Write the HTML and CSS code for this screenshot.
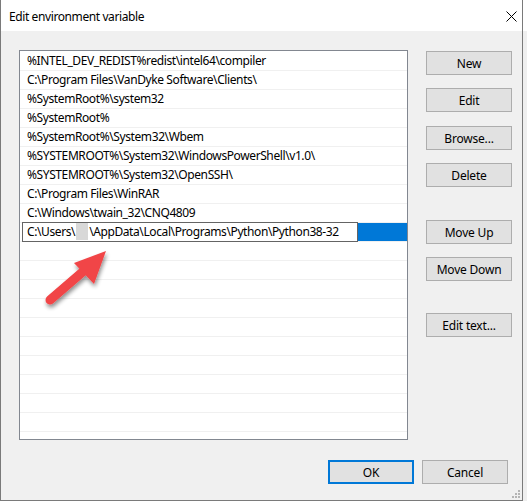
FILE: index.html
```html
<!DOCTYPE html>
<html>
<head>
<meta charset="utf-8">
<link rel="stylesheet" href="styles.css">
</head>
<body>
<div class="window">
  <div class="titlebar">
    <span class="title">Edit environment variable</span>
    <svg class="close" width="11" height="11" viewBox="0 0 11 11"><path d="M0.5 0.5 L10.5 10.5 M10.5 0.5 L0.5 10.5" stroke="#000" stroke-width="1" fill="none"/></svg>
  </div>
  <div class="content">
    <div class="main">
      <div class="list">
        <div class="row">%INTEL_DEV_REDIST%redist\intel64\compiler</div>
        <div class="row">C:\Program Files\VanDyke Software\Clients\</div>
        <div class="row">%SystemRoot%\system32</div>
        <div class="row">%SystemRoot%</div>
        <div class="row">%SystemRoot%\System32\Wbem</div>
        <div class="row">%SYSTEMROOT%\System32\WindowsPowerShell\v1.0\</div>
        <div class="row">%SYSTEMROOT%\System32\OpenSSH\</div>
        <div class="row">C:\Program Files\WinRAR</div>
        <div class="row">C:\Windows\twain_32\CNQ4809</div>
        <div class="row selected">
          <div class="edit">C:\Users\<span class="blur"></span>\AppData\Local\Programs\Python\Python38-32</div>
          <div class="sel-fill"></div>
        </div>
        <div class="row"></div>
        <div class="row"></div>
        <div class="row"></div>
        <div class="row"></div>
        <div class="row"></div>
        <div class="row"></div>
        <div class="row"></div>
        <div class="row"></div>
        <div class="row"></div>
        <div class="row"></div>
        <div class="row"></div>
        <svg class="arrow" width="110" height="80" viewBox="0 0 110 80">
          <defs>
            <filter id="sh" x="-30%" y="-30%" width="160%" height="160%">
              <feGaussianBlur in="SourceAlpha" stdDeviation="2"/>
              <feOffset dx="1" dy="3" result="b"/>
              <feComponentTransfer><feFuncA type="linear" slope="0.45"/></feComponentTransfer>
              <feMerge><feMergeNode/><feMergeNode in="SourceGraphic"/></feMerge>
            </filter>
          </defs>
          <g filter="url(#sh)">
            <line x1="30" y1="60" x2="66" y2="29" stroke="#f14446" stroke-width="9" stroke-linecap="round"/>
            <polygon points="86,11 54,23 74,44" fill="#f14446"/>
          </g>
        </svg>
      </div>
      <div class="side">
        <button class="btn">New</button>
        <button class="btn g13">Edit</button>
        <button class="btn g14">Browse...</button>
        <button class="btn g13">Delete</button>
        <button class="btn g33">Move Up</button>
        <button class="btn g13">Move Down</button>
        <button class="btn g32">Edit text...</button>
      </div>
    </div>
    <div class="footer">
      <button class="btn ok">OK</button>
      <button class="btn">Cancel</button>
    </div>
    <svg class="grip" width="9" height="9" viewBox="0 0 9 9" fill="#b4b4b4">
      <rect x="6" y="0" width="2" height="2"/>
      <rect x="3" y="3" width="2" height="2"/><rect x="6" y="3" width="2" height="2"/>
      <rect x="0" y="6" width="2" height="2"/><rect x="3" y="6" width="2" height="2"/><rect x="6" y="6" width="2" height="2"/>
    </svg>
  </div>
</div>
</body>
</html>
```
FILE: styles.css
```css
html, body {
  margin: 0;
  padding: 0;
}
body {
  width: 527px;
  height: 501px;
  background: linear-gradient(#ffffff 0, #ffffff 31px, #efefef 31px);
  font-family: "Noto Sans", "Liberation Sans", sans-serif;
  font-size: 12px;
  letter-spacing: -0.4px;
  color: #000;
  overflow: hidden;
}
.window {
  width: 523px;
  height: 501px;
  box-sizing: border-box;
  border-left: 1px solid #7a7a7a;
  border-right: 1px solid #7a7a7a;
  border-bottom: 1px solid #7a7a7a;
  display: flex;
  flex-direction: column;
  background: #f0f0f0;
}
.titlebar {
  height: 31px;
  background: #fff;
  display: flex;
  align-items: center;
  justify-content: space-between;
  padding: 2px 5px 0 8px;
  box-sizing: border-box;
}
.title {
  font-size: 12px;
  color: #000;
}
.close {
  display: block;
  margin-top: -1px;
}
.content {
  flex: 1;
  position: relative;
  padding: 19px 0 0 18px;
}
.main {
  display: flex;
  align-items: flex-start;
}
.list {
  position: relative;
  width: 389px;
  height: 390px;
  box-sizing: border-box;
  border: 1px solid #828790;
  background: #fff;
  padding-top: 1px;
  overflow: hidden;
}
.row {
  height: 18px;
  border-bottom: 1px solid #f0f0f0;
  line-height: 18px;
  padding-left: 7px;
  white-space: nowrap;
}
.row.selected {
  display: flex;
  padding-left: 2px;
}
.edit {
  width: 336px;
  height: 20px;
  margin-top: -1px;
  box-sizing: border-box;
  border: 1px solid #646464;
  background: #fff;
  padding-left: 4px;
  line-height: 18px;
  position: relative;
  z-index: 1;
}
.blur {
  display: inline-block;
  width: 12px;
  height: 17px;
  vertical-align: top;
  background: #d8d8d8;
  margin: 0 1px;
}
.sel-fill {
  flex: 1;
  background: #0078d7;
}
.arrow {
  position: absolute;
  left: 0;
  top: 189px;
  z-index: 2;
}
.side {
  display: flex;
  flex-direction: column;
  margin-left: 18px;
  padding-top: 1px;
}
.btn {
  width: 86px;
  height: 24px;
  box-sizing: border-box;
  border: 1px solid #adadad;
  background: #e1e1e1;
  font-family: inherit;
  font-size: 12px;
  letter-spacing: -0.2px;
  color: #000;
  padding: 0;
  margin: 0;
}
.g13 { margin-top: 13px; }
.g14 { margin-top: 14px; }
.g32 { margin-top: 32px; }
.g33 { margin-top: 33px; }
.footer {
  display: flex;
  justify-content: flex-end;
  gap: 8px;
  margin-top: 20px;
  padding-right: 14px;
}
.btn.ok {
  border: 2px solid #0078d7;
}
.grip {
  position: absolute;
  right: 1px;
  bottom: 1px;
}
```
